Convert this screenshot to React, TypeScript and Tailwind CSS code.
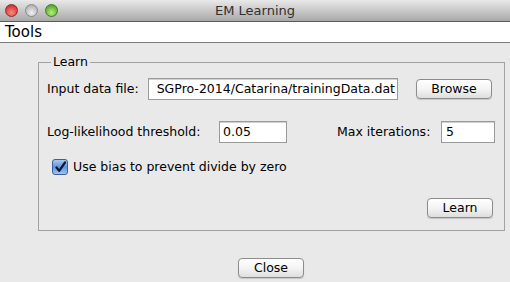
import React from "react";

const font = { fontFamily: '"DejaVu Sans", "Liberation Sans", sans-serif' };

function Light({ from, to, border }: { from: string; to: string; border: string }) {
  return (
    <div
      className="h-[13px] w-[13px] rounded-full border"
      style={{ background: `radial-gradient(circle at 50% 70%, ${to} 0%, ${from} 90%)`, borderColor: border }}
    />
  );
}

function AquaButton({ label, w }: { label: string; w: string }) {
  return (
    <button
      className={`${w} h-[20px] rounded-[4px] border border-[#8c8c8c] bg-gradient-to-b from-[#ffffff] via-[#f4f4f4] to-[#dedede] text-[12.5px] text-black shadow-[0_1px_1px_rgba(0,0,0,0.15)] leading-none`}
    >
      {label}
    </button>
  );
}

export default function App() {
  return (
    <div className="flex h-[282px] w-[510px] flex-col overflow-hidden bg-[#e9e9e9] text-black" style={font}>
      {/* Title bar */}
      <div className="relative flex h-[22px] items-center border-b border-[#5a5a5a] bg-gradient-to-b from-[#e9e9e9] to-[#a9a9a9] px-[4px]">
        <div className="flex gap-[7px] pl-[1px]">
          <Light from="#c8262a" to="#ff8a7a" border="#8e2a2a" />
          <Light from="#a8a8a8" to="#f0f0f0" border="#8a8a8a" />
          <Light from="#4a9a22" to="#b6f07a" border="#3f7a25" />
        </div>
        <div className="absolute inset-0 flex items-center justify-center text-[13px] text-[#303030]">EM Learning</div>
      </div>
      {/* Menu bar */}
      <div className="flex h-[21px] items-center border-b border-[#7c7c7c] bg-white px-[5px] text-[15px]">Tools</div>

      {/* Body */}
      <div className="flex flex-1 flex-col">
        <fieldset className="ml-[38px] mr-[5px] mt-[12px] h-[176px] border border-[#a2a2a2] px-[8px]">
          <legend className="ml-[4px] px-[2px] text-[12.5px] leading-[14px]">Learn</legend>
          <div className="mt-[9px] flex h-[22px] items-center">
            <span className="w-[101px] text-[12.5px]">Input data file:</span>
            <div className="flex h-[22px] w-[250px] items-center justify-end overflow-hidden whitespace-nowrap border border-[#9a9a9a] bg-white pr-[2px] text-[12.5px] shadow-[inset_0_1px_0_#d0d0d0]">
              SGPro-2014/Catarina/trainingData.dat
            </div>
            <div className="ml-[18px] mt-[-3px]">
              <AquaButton label="Browse" w="w-[76px]" />
            </div>
          </div>
          <div className="mt-[21px] flex h-[22px] items-center">
            <span className="w-[172px] text-[12.5px]">Log-likelihood threshold:</span>
            <div className="flex h-[22px] w-[68px] items-center border border-[#9a9a9a] bg-white pl-[3px] text-[12.5px] shadow-[inset_0_1px_0_#d0d0d0]">0.05</div>
            <span className="ml-[50px] w-[104px] text-[12.5px]">Max iterations:</span>
            <div className="flex h-[22px] w-[54px] items-center border border-[#9a9a9a] bg-white pl-[4px] text-[12.5px] shadow-[inset_0_1px_0_#d0d0d0]">5</div>
          </div>
          <div className="mt-[15px] flex items-center pl-[5px]">
            <div className="flex h-[16px] w-[16px] items-center justify-center rounded-[3px] border border-[#3d5f9a] bg-gradient-to-b from-[#a9c9f2] via-[#5c93e0] to-[#9cc4f4]">
              <svg width="13" height="13" viewBox="0 0 13 13">
                <path d="M2.5 6.5 L5.2 9.8 L11 1.5" fill="none" stroke="#14142e" strokeWidth="2.2" strokeLinecap="round" strokeLinejoin="round" />
              </svg>
            </div>
            <span className="ml-[5px] text-[12.5px]">Use bias to prevent divide by zero</span>
          </div>
          <div className="mt-[21px] flex justify-end pr-[3px]">
            <AquaButton label="Learn" w="w-[66px]" />
          </div>
        </fieldset>
        <div className="mt-[27px] flex justify-center pl-[32px]">
          <AquaButton label="Close" w="w-[66px]" />
        </div>
      </div>
    </div>
  );
}
